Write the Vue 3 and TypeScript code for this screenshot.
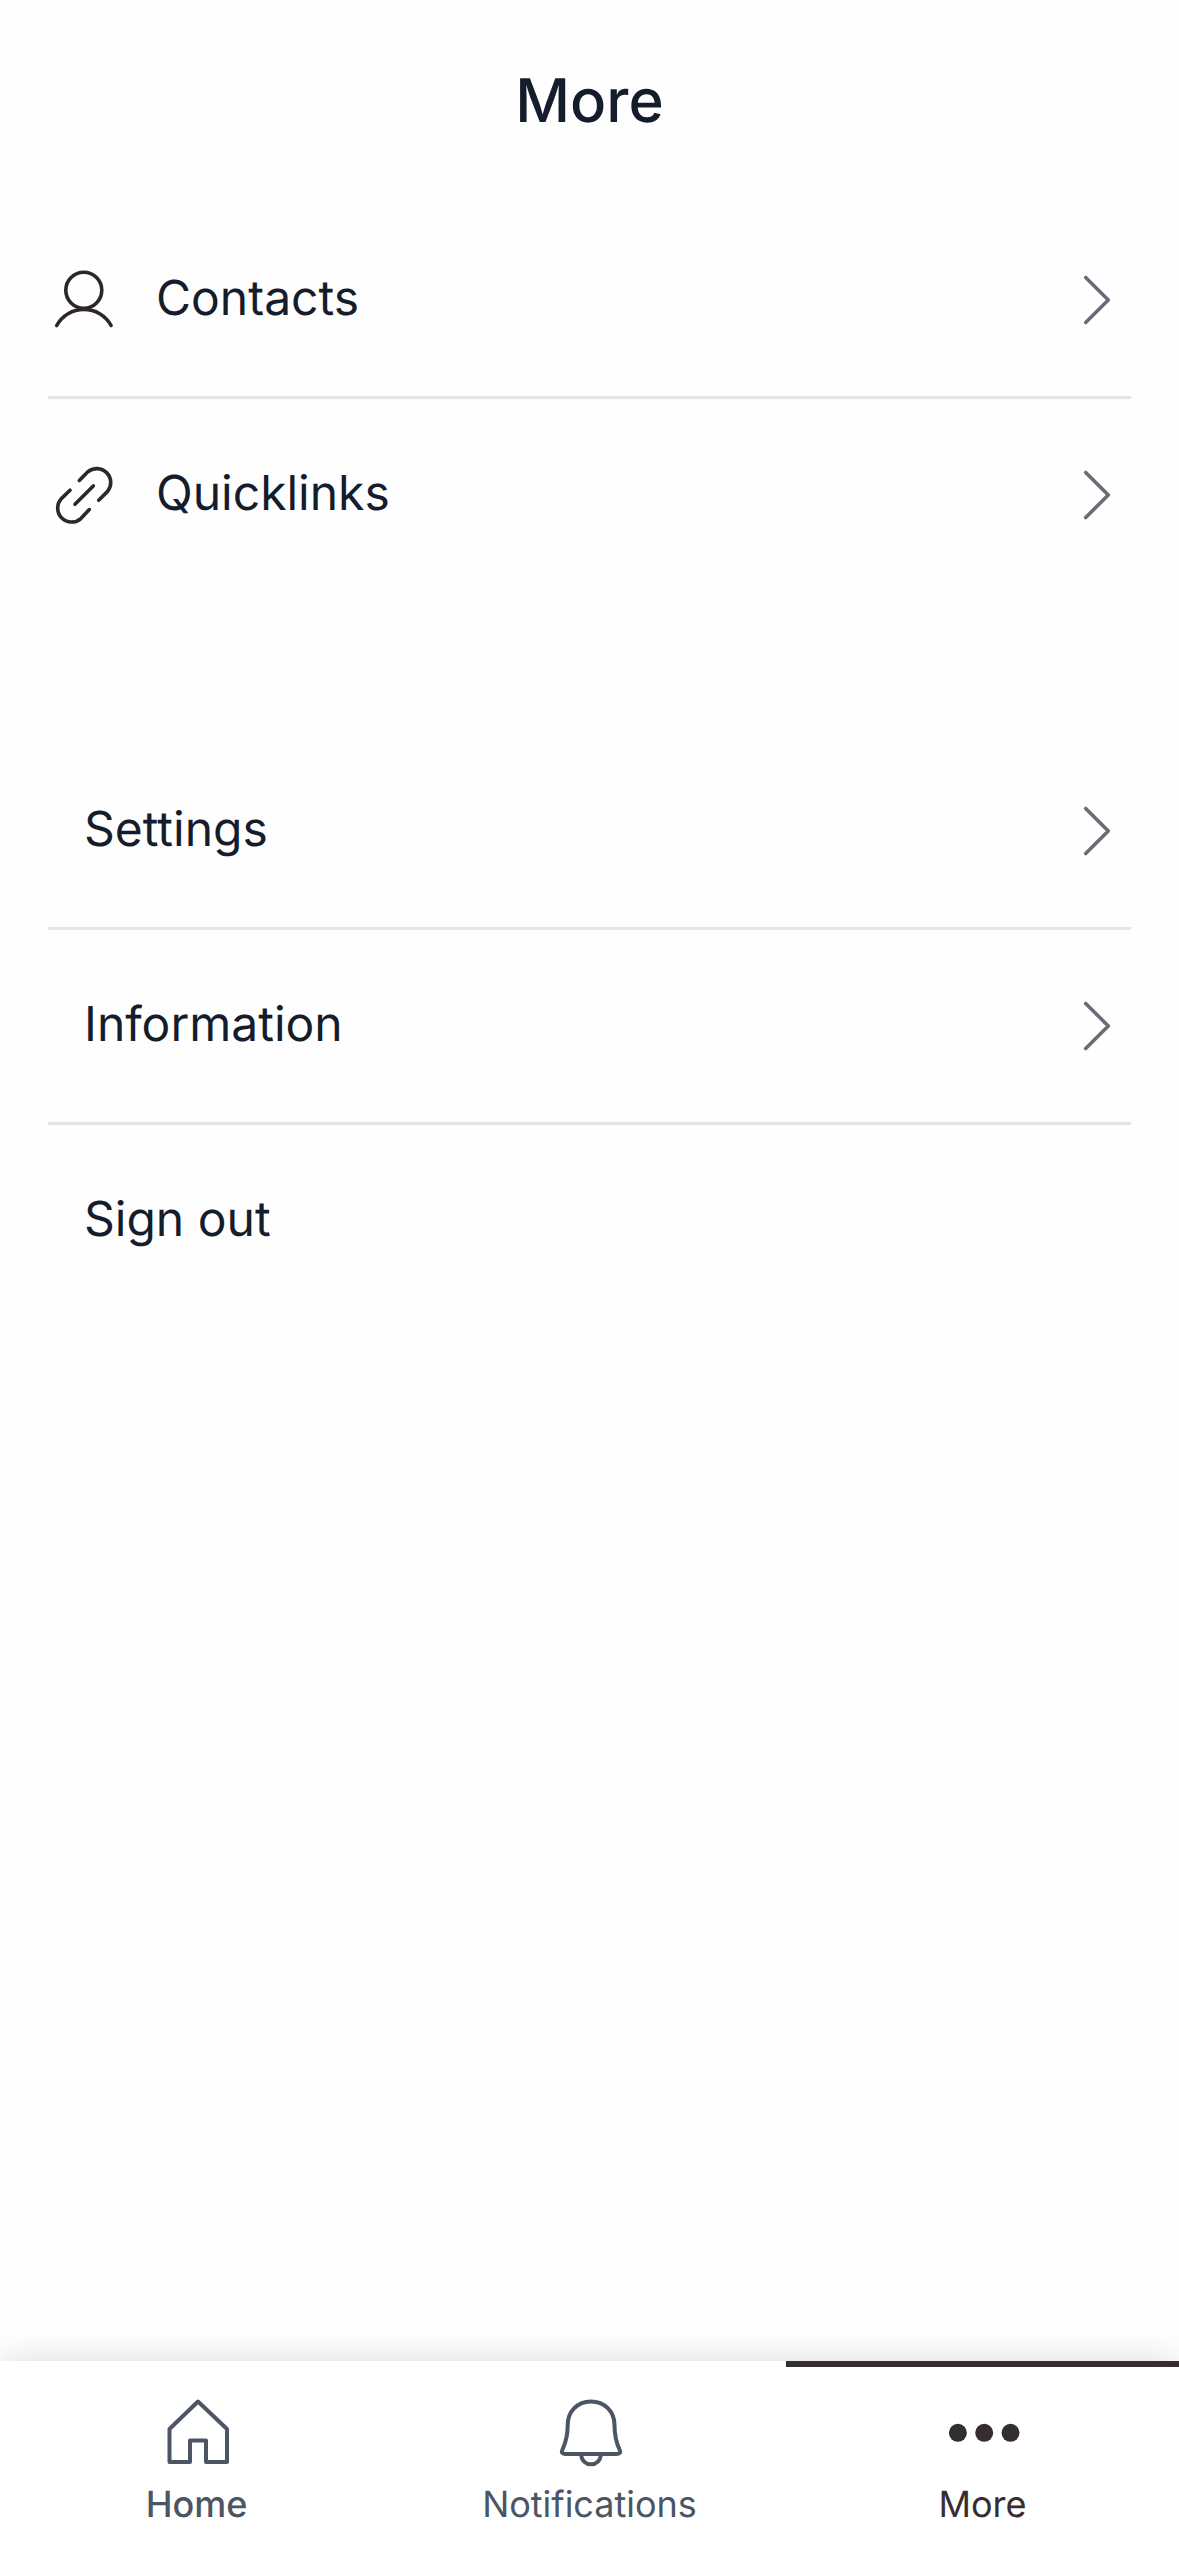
<script setup lang="ts">
interface Entry {
  label: string
  icon?: 'user' | 'link'
  arrow: boolean
}

interface Tab {
  label: string
  icon: 'home' | 'bell' | 'dots'
  active: boolean
  strong: boolean
}

const groups: Entry[][] = [
  [
    { label: 'Contacts', icon: 'user', arrow: true },
    { label: 'Quicklinks', icon: 'link', arrow: true },
  ],
  [
    { label: 'Settings', arrow: true },
    { label: 'Information', arrow: true },
    { label: 'Sign out', arrow: false },
  ],
]

const tabs: Tab[] = [
  { label: 'Home', icon: 'home', active: false, strong: true },
  { label: 'Notifications', icon: 'bell', active: false, strong: false },
  { label: 'More', icon: 'dots', active: true, strong: false },
]
</script>

<template>
  <div class="screen">
    <header class="header">
      <h1 class="title">More</h1>
    </header>

    <main class="content">
      <ul v-for="(group, g) in groups" :key="g" class="group">
        <li v-for="entry in group" :key="entry.label" class="item">
          <button type="button" class="row" :class="{ plain: !entry.icon }">
            <svg v-if="entry.icon" class="icon dark" viewBox="0 0 72 72" aria-hidden="true">
              <template v-if="entry.icon === 'user'">
                <circle cx="35.8" cy="26.3" r="18" />
                <path d="M8.7 61.5A31 31 0 0 1 63.1 61.5" />
              </template>
              <template v-else>
                <path d="M31.3 21.5L39.8 12.8A14 14 0 0 1 59.6 32.4L50.7 41.2" />
                <path d="M22 31.2L13.1 39.9A14 14 0 0 0 32.9 59.6L41.3 50.6" />
                <path d="M45.3 26.9L27 45.3" />
              </template>
            </svg>
            <span class="label">{{ entry.label }}</span>
            <svg v-if="entry.arrow" class="icon arrow" viewBox="0 0 72 72" aria-hidden="true">
              <path d="M26.700 13.500L49.300 36L26.700 58.500" />
            </svg>
          </button>
        </li>
      </ul>
    </main>

    <nav class="tabs">
      <a
        v-for="tab in tabs"
        :key="tab.label"
        href="#"
        class="tab"
        :class="{ active: tab.active, strong: tab.strong }"
        :aria-current="tab.active ? 'page' : undefined"
      >
        <svg class="icon" viewBox="0 0 72 72" aria-hidden="true">
          <path
            v-if="tab.icon === 'home'"
            d="M37 4.500L66 32V65H45V43.500H29V65H8.500V32Z"
          />
          <template v-else-if="tab.icon === 'bell'">
            <path
              d="M37 4.500C23.500 4.500 13.700 14.500 13.700 28C13.700 38 12 45 8.500 52.500C7.100 55.500 8 57 11 57H63C66 57 66.900 55.500 65.500 52.500C62 45 60.500 38 60.500 28C60.500 14.500 50.500 4.500 37 4.500Z"
            />
            <path d="M27 58C28 64 31.500 67.300 37 67.300C42.500 67.300 46 64 47 58" />
          </template>
          <g v-else class="dots">
            <circle cx="10.900" cy="35.800" r="9" />
            <circle cx="37.200" cy="35.800" r="9" />
            <circle cx="63.500" cy="35.800" r="9" />
          </g>
        </svg>
        <span class="tab-label">{{ tab.label }}</span>
      </a>
    </nav>
  </div>
</template>

<style>
body {
  margin: 0;
  background: #fefefe;
}
</style>

<style scoped>
.screen {
  display: flex;
  flex-direction: column;
  min-height: 100vh;
  background: #fefefe;
  color: #151d2c;
  font-family: Inter, "Liberation Sans", sans-serif;
  text-rendering: geometricPrecision;
}

.header {
  padding: 63px 48px 65px;
  text-align: center;
}

.title {
  margin: 0;
  font-size: 60px;
  font-weight: 500;
  line-height: 76px;
}

.content {
  flex: 1;
  display: flex;
  flex-direction: column;
  gap: 144px;
  padding: 0 48px;
}

.group {
  margin: 0;
  padding: 0;
  list-style: none;
}

.item + .item {
  border-top: 3px solid #e5e5e5;
}

.row {
  display: flex;
  align-items: center;
  gap: 36px;
  width: 100%;
  height: 192px;
  padding: 0;
  border: 0;
  background: none;
  color: inherit;
  font: inherit;
  text-align: left;
  text-rendering: inherit;
}

.row.plain {
  padding-left: 36px;
}

.label {
  flex: 1;
  padding-bottom: 4px;
  font-size: 48px;
  line-height: 64px;
}

.icon {
  flex: none;
  width: 72px;
  height: 72px;
  overflow: visible;
  fill: none;
  stroke: currentColor;
  stroke-width: 4;
  stroke-linecap: round;
  stroke-linejoin: round;
}

.dark {
  color: #2d2729;
  stroke-width: 3.6;
}

.arrow {
  color: #6a6b78;
  stroke-width: 3.6;
}

.tabs {
  position: sticky;
  bottom: 0;
  display: flex;
  background: #ffffff;
  box-shadow: 0 0 32px rgba(0, 0, 0, 0.14);
}

.tab {
  flex: 1 1 0;
  display: flex;
  flex-direction: column;
  align-items: center;
  gap: 13px;
  padding: 30px 0 27px;
  border-top: 6px solid transparent;
  color: #4b5563;
  text-decoration: none;
}

.tab.active {
  border-top-color: #352e31;
  color: #352e31;
}

.tab.strong {
  font-weight: 500;
}

.tab-label {
  font-size: 36px;
  line-height: 44px;
}

.dots {
  fill: currentColor;
  stroke: none;
}
</style>
